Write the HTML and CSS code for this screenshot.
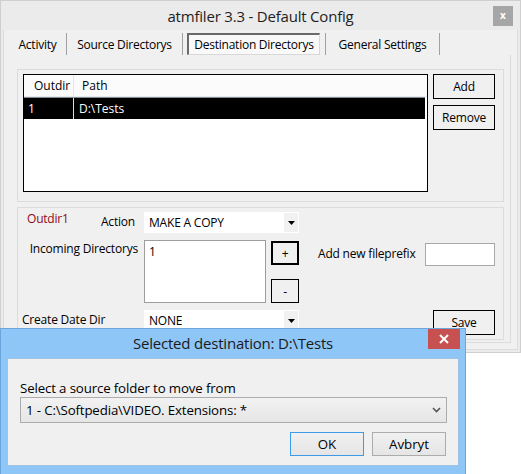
FILE: index.html
```html
<!DOCTYPE html>
<html>
<head>
<meta charset="utf-8">
<link rel="stylesheet" href="styles.css">
</head>
<body>
<div class="window">
  <div class="titlebar">
    <span></span>
    <span class="title">atmfiler 3.3 - Default Config</span>
    <span class="wclose">x</span>
  </div>
  <div class="client">
    <div class="tabs">
      <div class="tab t1">Activity</div>
      <div class="tab t2">Source Directorys</div>
      <div class="tab t3"><span class="sel">Destination Directorys</span></div>
      <div class="tab t4">General Settings</div>
    </div>
    <div class="page">
      <div class="group g1">
        <div class="list">
          <div class="lhead">
            <div class="c1">Outdir</div>
            <div class="c2">Path</div>
          </div>
          <div class="lsep"></div>
          <div class="lrow">
            <div class="c1">1</div>
            <div class="c2">D:\Tests</div>
          </div>
        </div>
        <div class="btncol">
          <div class="btn">Add</div>
          <div class="btn">Remove</div>
        </div>
      </div>
      <div class="group g2">
        <div class="lab1"><span class="red">Outdir1</span><span>Action</span></div>
        <div class="select s1"><span>MAKE A COPY</span><span class="arr"><svg width="7" height="4" viewBox="0 0 7 4"><polygon points="0,0 7,0 3.5,4" fill="#000"/></svg></span></div>
        <div class="lab2">Incoming Directorys</div>
        <div class="textarea">1</div>
        <div class="pm">
          <div class="btn plus">+</div>
          <div class="btn minus">-</div>
        </div>
        <div class="lab3">Add new fileprefix</div>
        <div class="input"></div>
        <div class="lab4">Create Date Dir</div>
        <div class="select s2"><span>NONE</span><span class="arr"><svg width="7" height="4" viewBox="0 0 7 4"><polygon points="0,0 7,0 3.5,4" fill="#000"/></svg></span></div>
        <div class="btn save">Save</div>
      </div>
    </div>
  </div>
</div>

<div class="dialog">
  <div class="dtitle">
    <span></span>
    <span class="dtext">Selected destination: D:\Tests</span>
    <span class="dclose"><svg width="10" height="10" viewBox="0 0 10 10"><path d="M1 1L9 9M9 1L1 9" stroke="#fff" stroke-width="2"/></svg></span>
  </div>
  <div class="dclient">
    <div class="dlabel">Select a source folder to move from</div>
    <div class="combo"><span>1 - C:\Softpedia\VIDEO. Extensions: *</span><svg width="9" height="6" viewBox="0 0 9 6"><polyline points="1,1 4.5,4.5 8,1" fill="none" stroke="#555" stroke-width="1.6"/></svg></div>
    <div class="dbtns">
      <div class="dbtn ok">OK</div>
      <div class="dbtn">Avbryt</div>
    </div>
  </div>
</div>
</body>
</html>
```

FILE: styles.css
```css
* { box-sizing: border-box; }
body {
  margin: 0;
  background: #fff;
  font-family: "Open Sans", "Noto Sans", sans-serif;
  font-size: 12px;
  color: #000;
  width: 521px;
  height: 474px;
  overflow: hidden;
  position: relative;
}
.window {
  width: 521px;
  height: 353px;
  background: #ebebeb;
  border: 1px solid #cfcfcf;
}
.titlebar {
  height: 29px;
  display: grid;
  grid-template-columns: 1fr auto 1fr;
  align-items: center;
}
.title {
  font-size: 15px;
  color: #1e1e1e;
  letter-spacing: -0.2px;
  padding-top: 1px;
}
.wclose {
  justify-self: end;
  width: 20px;
  height: 20px;
  margin-right: 7px;
  background: #a6a6a6;
  color: #fff;
  font-size: 10px;
  font-weight: bold;
  display: flex;
  align-items: center;
  justify-content: center;
  line-height: 1;
  padding-bottom: 2px;
}
.client {
  margin-left: 2px;
  width: 515px;
  height: 320px;
  border-left: 1px solid #dcdcdc;
  border-right: 1px solid #dcdcdc;
  border-bottom: 1px solid #dcdcdc;
  background: #f0f0f0;
  padding-top: 3px;
  padding-left: 5px;
}
.tabs {
  display: flex;
  height: 22px;
}
.tab {
  height: 22px;
  border-right: 1px solid #a0a0a0;
  display: flex;
  align-items: center;
  justify-content: center;
  letter-spacing: -0.25px;
  white-space: nowrap;
}
.t1 { width: 58px; }
.t2 { width: 116px; }
.t3 { width: 143px; padding-left: 4px; justify-content: flex-start; }
.t4 { width: 114px; }
.sel {
  display: flex;
  align-items: center;
  justify-content: center;
  width: 133px;
  height: 22px;
  background: #f9f9f9;
  border-top: 2px solid #6a6a6a;
  border-left: 2px solid #6a6a6a;
  border-right: 1px solid #d8d8d8;
  border-bottom: 1px solid #d8d8d8;
}
.page {
  width: 502px;
  height: 288px;
  border-right: 1px solid #dcdcdc;
  border-bottom: 1px solid #dcdcdc;
  padding-top: 14px;
  padding-left: 8px;
}
.group {
  width: 487px;
  height: 133px;
  border: 1px solid #dcdcdc;
}
.g1 {
  display: flex;
  padding: 4px 0 0 5px;
  gap: 5px;
}
.list {
  width: 405px;
  height: 118px;
  border: 1px solid #000;
  background: #fff;
}
.lhead {
  height: 22px;
  display: flex;
  background: #fbfbfb;
  border-bottom: 1px solid #e3ebf6;
}
.lhead .c1 {
  width: 50px;
  padding-left: 10px;
  border-right: 1px solid #e5e5e5;
  display: flex; align-items: center;
}
.lhead .c2 {
  padding-left: 8px;
  display: flex; align-items: center;
}
.lsep { height: 1px; background: #8a8a8a; width: 401px; }
.lrow {
  height: 21px;
  width: 401px;
  background: #000;
  color: #fff;
  display: flex;
}
.lrow .c1 {
  width: 50px;
  padding-left: 4px;
  border-right: 1px solid #ddd;
  display: flex; align-items: center;
}
.lrow .c2 {
  padding-left: 5px;
  display: flex; align-items: center;
}
.btncol {
  display: flex;
  flex-direction: column;
  gap: 6px;
}
.btn {
  width: 62px;
  height: 25px;
  border: 1px solid #000;
  background: #f0f0f0;
  display: flex;
  align-items: center;
  justify-content: center;
  letter-spacing: -0.2px;
}
.g2 {
  margin-top: 5px;
  display: grid;
  grid-template-columns: 126px 122px 5px 28px 19px 107px 70px;
  grid-template-rows: 21px 63px 25px;
  row-gap: 7px;
  padding-top: 4px;
}
.lab1 {
  grid-row: 1; grid-column: 1;
  display: flex;
  justify-content: space-between;
  padding: 1px 9px 0 9px;
  letter-spacing: -0.2px;
}
.red { color: #8b0a18; margin-top: -3px; }
.select {
  background: #fff;
  display: flex;
  justify-content: space-between;
  align-items: center;
  padding-left: 5px;
  letter-spacing: -0.2px;
}
.s1 { grid-row: 1; grid-column: 2 / 5; }
.arr {
  width: 16px;
  align-self: stretch;
  background: #f1f1f1;
  display: flex;
  align-items: center;
  justify-content: center;
  border: 1px solid #fff;
}
.lab2 {
  grid-row: 2; grid-column: 1;
  text-align: right;
  padding-right: 6px;
  letter-spacing: -0.2px;
  white-space: nowrap;
}
.textarea {
  grid-row: 2; grid-column: 2;
  border: 1px solid #9d9d9d;
  background: #fff;
  padding: 2px 4px;
}
.pm {
  grid-row: 2; grid-column: 4;
  display: flex;
  flex-direction: column;
  justify-content: space-between;
  padding-top: 1px;
}
.pm .btn { width: 28px; height: 24px; }
.plus { border: 2px solid #000; }
.lab3 {
  grid-row: 2; grid-column: 6;
  padding-top: 5px;
  letter-spacing: -0.2px;
  white-space: nowrap;
}
.input {
  grid-row: 2; grid-column: 7;
  width: 70px;
  height: 23px;
  margin-top: 3px;
  border: 1px solid #a9a9a9;
  background: #fff;
}
.lab4 {
  grid-row: 3; grid-column: 1;
  padding-left: 4px;
  padding-top: 1px;
  letter-spacing: -0.2px;
  white-space: nowrap;
}
.s2 { grid-row: 3; grid-column: 2 / 5; height: 21px; }
.save {
  grid-row: 3;
  grid-column: 6 / 8;
  justify-self: end;
}
.dialog {
  position: absolute;
  left: 0;
  top: 328px;
  width: 466px;
  height: 146px;
  background: #8ec6f8;
  border: 1px solid #6aa6dc;
  border-bottom: none;
}
.dtitle {
  height: 29px;
  display: grid;
  grid-template-columns: 1fr auto 1fr;
  align-items: start;
}
.dtext {
  font-size: 15px;
  color: #1a1a1a;
  letter-spacing: -0.2px;
  padding-top: 4px;
}
.dclose {
  justify-self: end;
  margin-right: 5px;
  width: 32px;
  height: 20px;
  background: #c75050;
  display: flex;
  align-items: center;
  justify-content: center;
}
.dclient {
  margin-left: 6px;
  width: 452px;
  height: 108px;
  background: #f0f0f0;
  border: 1px solid #9ec2e2;
  padding: 20px 0 0 12px;
}
.dlabel {
  font-size: 13.3px;
  letter-spacing: -0.15px;
  height: 18px;
  line-height: 18px;
}
.combo {
  width: 427px;
  height: 26px;
  border: 1px solid #acacac;
  background: linear-gradient(#f2f2f2, #e6e6e6);
  display: flex;
  align-items: center;
  justify-content: space-between;
  padding: 0 5px 0 5px;
  font-size: 13.3px;
  letter-spacing: -0.15px;
}
.dbtns {
  display: flex;
  justify-content: flex-end;
  gap: 8px;
  width: 426px;
  margin-top: 9px;
}
.dbtn {
  width: 74px;
  height: 24px;
  border: 1px solid #acacac;
  background: linear-gradient(#f0f0f0, #e5e5e5);
  display: flex;
  align-items: center;
  justify-content: center;
  font-size: 13.3px;
}
.ok { border-color: #3c9ae8; }
```
